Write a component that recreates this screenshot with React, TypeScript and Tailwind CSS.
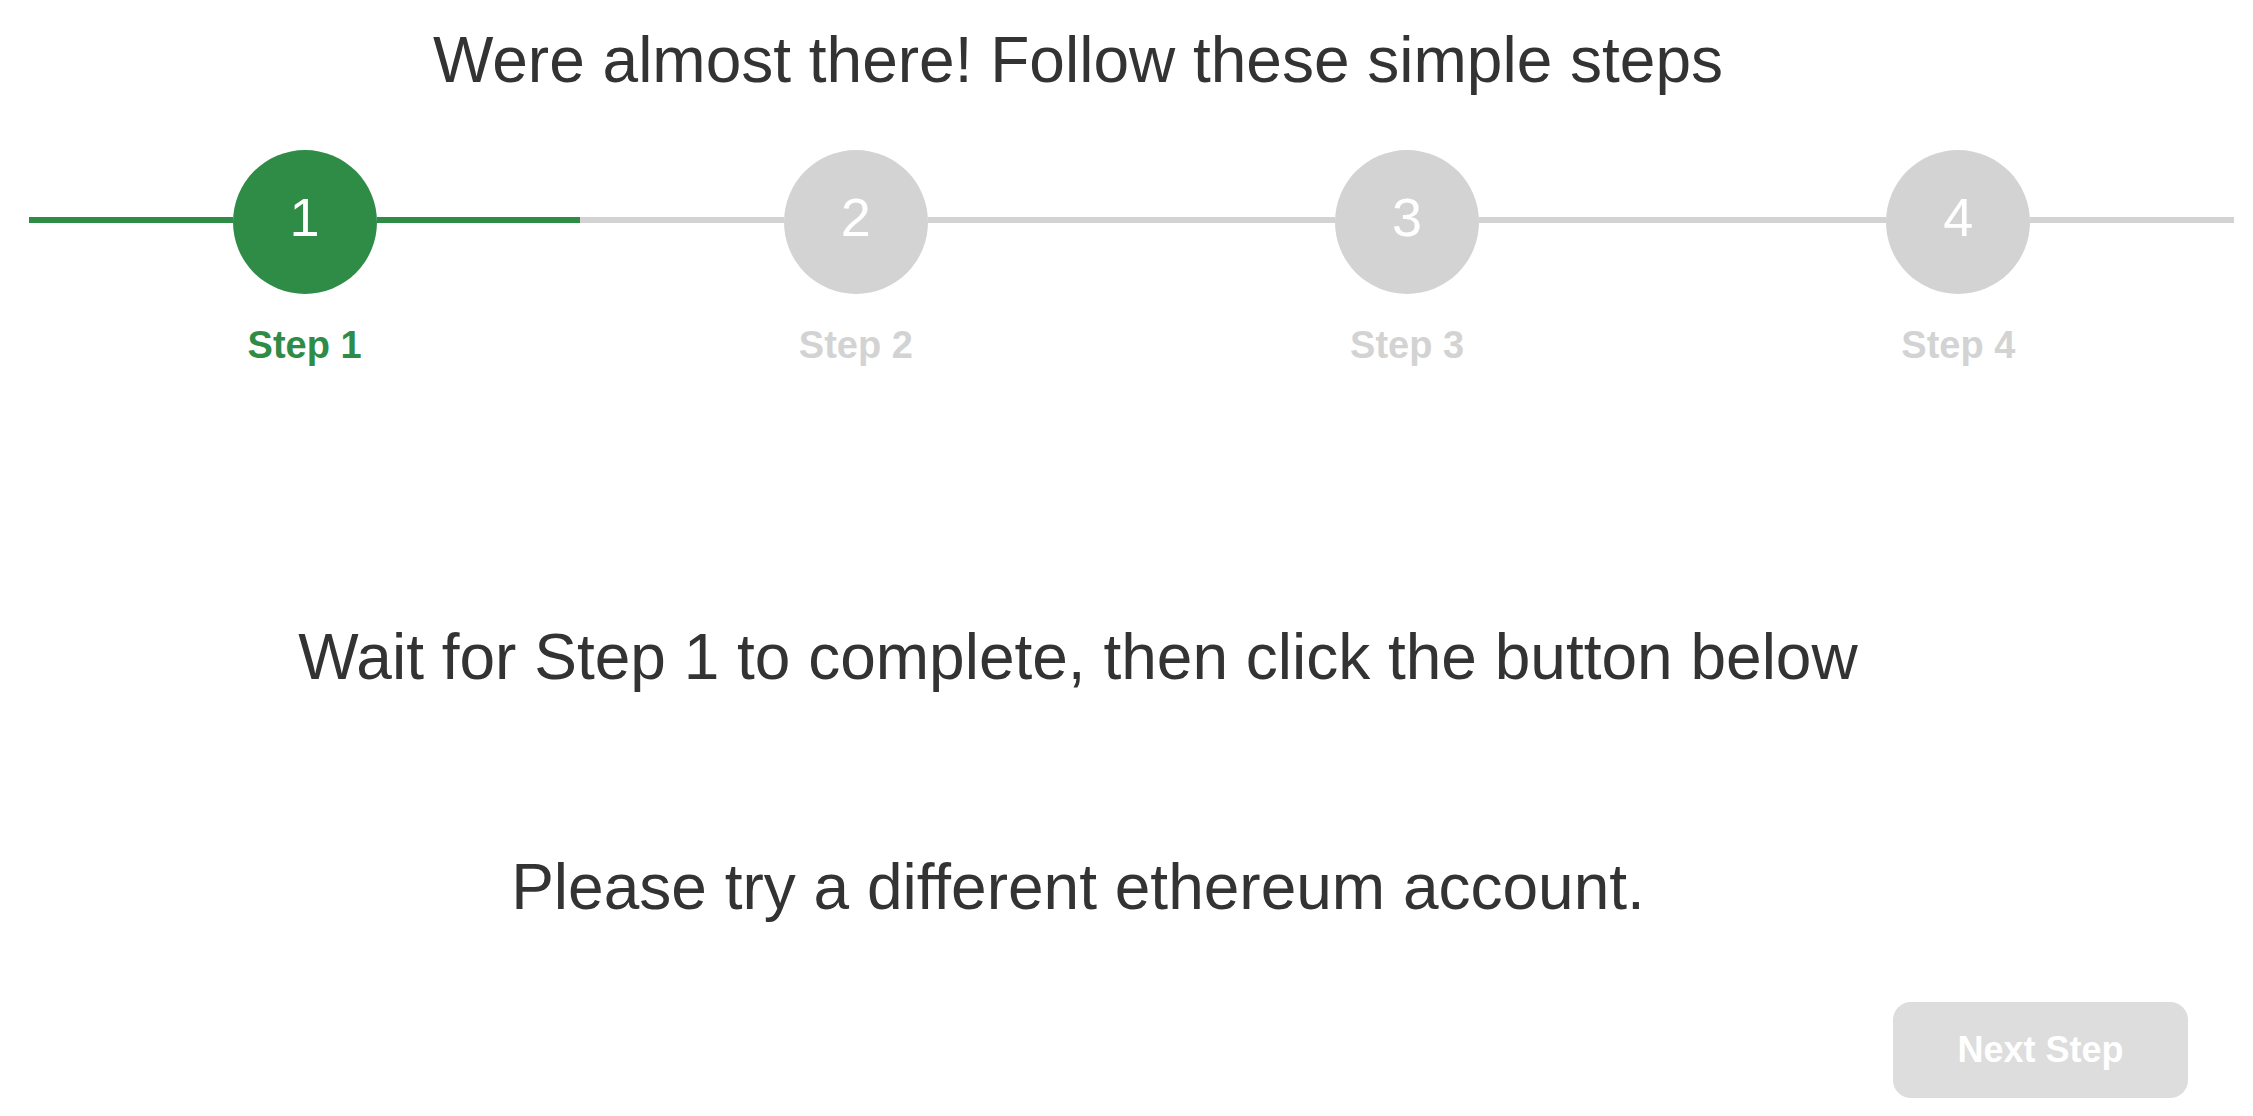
import React from 'react';

const GREEN = 'bg-[#2f8c47]';

type Step = { n: number; label: string; active: boolean };

const steps: Step[] = [
  { n: 1, label: 'Step 1', active: true },
  { n: 2, label: 'Step 2', active: false },
  { n: 3, label: 'Step 3', active: false },
  { n: 4, label: 'Step 4', active: false },
];

const StepItem: React.FC<{ step: Step }> = ({ step }) => {
  const lineColor = step.active ? GREEN : 'bg-[#d3d3d3]';
  return (
    <div className="flex flex-col items-center">
      <div className="flex w-full items-center">
        <div className={`-mt-[4px] h-[6px] flex-1 ${lineColor}`} />
        <div
          className={`flex h-[144px] w-[144px] shrink-0 items-center justify-center rounded-full ${
            step.active ? GREEN : 'bg-[#d3d3d3]'
          }`}
        >
          <span className="-mt-[10px] text-[54px] leading-none text-white">{step.n}</span>
        </div>
        <div className={`-mt-[4px] h-[6px] flex-1 ${lineColor}`} />
      </div>
      <div
        className={`mt-[29px] text-[38px] font-bold leading-[44px] ${
          step.active ? 'text-[#2f8c47]' : 'text-[#d3d3d3]'
        }`}
      >
        {step.label}
      </div>
    </div>
  );
};

export default function App() {
  return (
    <div
      className="h-[1116px] w-full overflow-hidden bg-white text-[#333333]"
      style={{ fontFamily: '"Liberation Sans", Arial, sans-serif' }}
    >
      <div className="pr-[97px] pt-[23px] text-center text-[64px] leading-[74px]">
        Were almost there! Follow these simple steps
      </div>

      {/* stepper */}
      <div className="ml-[29px] mt-[53px] grid w-[2205px] grid-cols-4">
        {steps.map((s) => (
          <StepItem key={s.n} step={s} />
        ))}
      </div>

      <div className="mt-[253px] pr-[97px] text-center text-[64px] leading-[74px]">
        Wait for Step 1 to complete, then click the button below
      </div>

      <div className="mt-[156px] pr-[97px] text-center text-[64px] leading-[74px]">
        Please try a different ethereum account.
      </div>

      <div className="mt-[78px] flex justify-end pr-[65px]">
        <button
          disabled
          className="flex h-[96px] w-[295px] items-center justify-center rounded-[18px] bg-[#dddddd] text-[36px] font-bold text-white"
        >
          Next Step
        </button>
      </div>
    </div>
  );
}
